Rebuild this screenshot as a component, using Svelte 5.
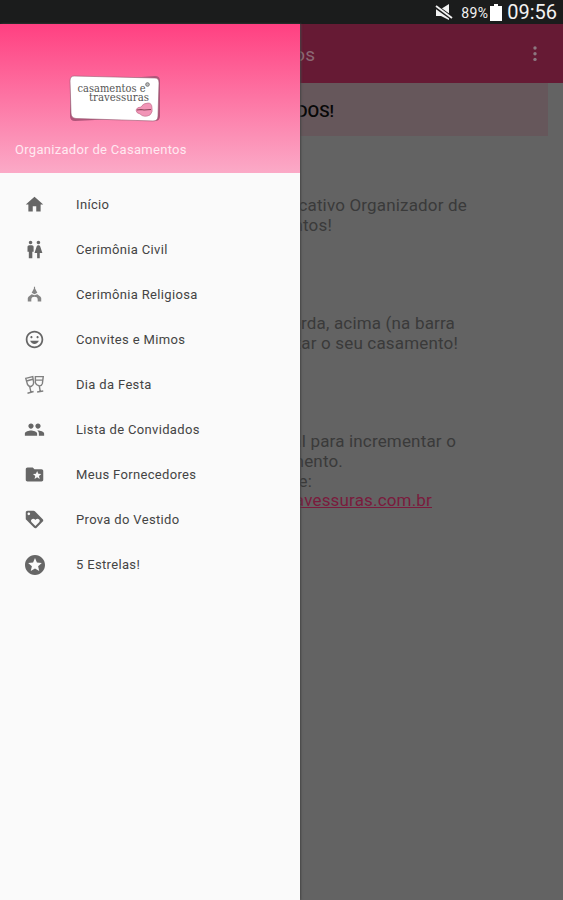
<script>
	const star =
		'M11.99 2C6.47 2 2 6.48 2 12s4.47 10 9.99 10C17.52 22 22 17.52 22 12S17.52 2 11.99 2zm4.24 16L12 15.45 7.77 18l1.12-4.81-3.73-3.23 4.92-.42L12 5l1.92 4.53 4.92.42-3.73 3.23L16.23 18z';

	const items = [
		{ label: 'Início', icon: 'M10 20v-6h4v6h5v-8h3L12 3 2 12h3v8z' },
		{
			label: 'Cerimônia Civil',
			icon: 'M5.5 22v-7.5H4V9c0-1.1.9-2 2-2h3c1.1 0 2 .9 2 2v5.5H9.5V22h-4zM18 22v-6h3l-2.54-7.63C18.18 7.55 17.42 7 16.56 7h-.12c-.86 0-1.63.55-1.9 1.37L12 16h3v6h3zM7.5 6c1.11 0 2-.89 2-2s-.89-2-2-2-2 .89-2 2 .89 2 2 2zm9 0c1.11 0 2-.89 2-2s-.89-2-2-2-2 .89-2 2 .89 2 2 2z'
		},
		{
			label: 'Cerimônia Religiosa',
			light: true,
			icon: 'M11.2 1h1.6v2.500l3.200 6-4 2-4-2 3.200-6zM8 11.500l4 1.500 4-1.500 4.500 3.500 1 2v5h-5v-3c0-3-2-4-4.500-4s-4.500 1-4.500 4v3h-5v-5l1-2z'
		},
		{
			label: 'Convites e Mimos',
			icon: 'M11.99 2C6.47 2 2 6.48 2 12s4.47 10 9.99 10C17.52 22 22 17.52 22 12S17.52 2 11.99 2zM12 20c-4.42 0-8-3.58-8-8s3.58-8 8-8 8 3.58 8 8-3.58 8-8 8zm3.5-9.500c.6 0 1.200-.5 1.200-1.200S16.100 8 15.500 8s-1.200.6-1.200 1.300.6 1.200 1.200 1.200zm-7 0c.6 0 1.200-.5 1.200-1.200S9.100 8 8.500 8s-1.200.6-1.200 1.300.6 1.200 1.200 1.200zM7 13.500c.8 2.400 2.800 3.500 5 3.500s4.200-1.100 5-3.500z'
		},
		{ label: 'Dia da Festa', glasses: true },
		{
			label: 'Lista de Convidados',
			icon: 'M16 11c1.66 0 2.99-1.34 2.99-3S17.66 5 16 5c-1.66 0-3 1.34-3 3s1.34 3 3 3zm-8 0c1.66 0 2.99-1.34 2.99-3S9.66 5 8 5C6.34 5 5 6.34 5 8s1.34 3 3 3zm0 2c-2.33 0-7 1.17-7 3.5V19h14v-2.5c0-2.33-4.67-3.5-7-3.5zm8 0c-.29 0-.62.02-.97.05 1.16.84 1.97 1.97 1.97 3.45V19h6v-2.5c0-2.33-4.67-3.5-7-3.5z'
		},
		{
			label: 'Meus Fornecedores',
			icon: 'M20 6h-8l-2-2H4c-1.1 0-1.99.9-1.99 2L2 18c0 1.1.9 2 2 2h16c1.1 0 2-.9 2-2V8c0-1.1-.9-2-2-2zm-2.06 11L15 15.28 12.06 17l.78-3.33-2.59-2.24 3.41-.29L15 8l1.34 3.14 3.41.29-2.59 2.24.78 3.33z'
		},
		{
			label: 'Prova do Vestido',
			icon: 'M21.41 11.58l-9-9C12.05 2.22 11.55 2 11 2H4c-1.1 0-2 .9-2 2v7c0 .55.22 1.05.59 1.42l9 9c.36.36.86.58 1.41.58.55 0 1.05-.22 1.41-.59l7-7c.37-.36.59-.86.59-1.41 0-.55-.23-1.06-.59-1.42zM5.5 7C4.67 7 4 6.33 4 5.5S4.67 4 5.5 4 7 4.67 7 5.5 6.33 7 5.5 7zm11.77 8.27L13 19.54l-4.27-4.27C8.28 14.81 8 14.19 8 13.5c0-1.38 1.12-2.5 2.5-2.5.69 0 1.32.28 1.77.74l.73.72.73-.73c.45-.45 1.08-.73 1.77-.73 1.38 0 2.5 1.12 2.5 2.5 0 .69-.28 1.32-.73 1.77z'
		},
		{ label: '5 Estrelas!', icon: star, large: true }
	];

	// right: where each line ends, counted from the drawer's edge
	const paragraphs = [
		[
			{ text: 'cativo Organizador de', right: 167 },
			{ text: 'ntos!', right: 32 }
		],
		[
			{ text: 'erda, acima (na barra', right: 155 },
			{ text: 'tar o seu casamento!', right: 158 }
		],
		[
			{ text: 'al para incrementar o', right: 156 },
			{ text: 'mento.', right: 43 },
			{ text: 'te:', right: 12 },
			{ text: 'avessuras.com.br', right: 132, link: true }
		]
	];
</script>

<div class="screen">
	<header class="status">
		<svg class="mute" viewBox="0 0 18 16">
			<path d="M1 5h5l8-5v16l-8-4H1z" fill="#f2f2f2" />
			<path d="M0 2l17 12" stroke="#1b1b1b" stroke-width="4" />
			<path d="M1 2l16 12" stroke="#f2f2f2" stroke-width="1.8" />
		</svg>
		<span class="percent">89%</span>
		<svg class="battery" viewBox="0 0 12 17"><path d="M4 0h4v2h4v15H0V2h4z" fill="#fff" /></svg>
		<span class="clock">09:56</span>
	</header>

	<div class="content">
		<nav class="drawer">
			<div class="banner">
				<svg class="logo" viewBox="0 0 92 48">
					<path d="M5 1Q46 5 86 1Q91 1 91 6V41Q91 46 86 46Q46 43 6 46Q1 46 1 41V6Q1 1 5 1z" fill="#b0557a" />
					<path d="M5 1L86 3Q90 3 90 8L89 41Q89 46 84 46L7 43.500Q2 43 2 38L1 6Q1 1 5 1z" fill="#fff" stroke="#9b5b72" stroke-width=".6" />
					<text x="8.5" y="17.3" textLength="68" lengthAdjust="spacingAndGlyphs">casamentos e</text>
					<text x="20" y="26" textLength="60" lengthAdjust="spacingAndGlyphs">travessuras</text>
					<circle cx="78.5" cy="9.5" r="1.8" fill="#bbb" stroke="#777" />
					<path d="M67 35q1-3 5-3q2-4 7-4q4 0 4 5q1 4-2 7q-6 3-10-1q-4-1-4-4z" fill="#f295b7" stroke="#bb6685" stroke-width=".6" />
					<path d="M68 35l4-.5 3 .5 7-.5" fill="none" stroke="#874157" stroke-width="1.2" />
				</svg>
				<p class="app-name">Organizador de Casamentos</p>
			</div>
			<ul>
				{#each items as item}
					<li>
						<span class="icon">
							{#if item.glasses}
								<svg class="glasses" viewBox="0 0 24 24">
									<path d="M2 5l8-2 1 7q0 3-2.500 4T4 12zM6.500 14.500L8 21M4 22l7-2M3 8l7-2" />
									<path d="M13 3l9 0-1 8q-1 3-4 2.500T13 10zM17.500 13.500l1 6M15 20.500l7-1M13 7h8" />
								</svg>
							{:else}
								<svg viewBox="0 0 24 24" class:large={item.large} class:light={item.light}>
									<path d={item.icon} />
								</svg>
							{/if}
						</span>
						<span class="label">{item.label}</span>
					</li>
				{/each}
			</ul>
		</nav>

		<main>
			<div class="toolbar">
				<span class="title">tos</span>
				<svg class="more" viewBox="0 0 4 16">
					<circle cx="2" cy="2" r="1.7" />
					<circle cx="2" cy="7.7" r="1.7" />
					<circle cx="2" cy="13.4" r="1.7" />
				</svg>
			</div>
			<div class="notice"><strong>DOS!</strong></div>
			<div class="texts">
				{#each paragraphs as lines}
					<div class="paragraph">
						{#each lines as line}
							<p class:link={line.link} style:width="{line.right}px"><span>{line.text}</span></p>
						{/each}
					</div>
				{/each}
			</div>
		</main>
	</div>
</div>

<style>
	:global(body) {
		background: #636363;
	}

	.screen {
		width: 563px;
		height: 900px;
		display: flex;
		flex-direction: column;
		overflow: hidden;
		font-family: Roboto, sans-serif;
	}

	p,
	ul {
		margin: 0;
		padding: 0;
	}

	.status {
		height: 24px;
		flex: none;
		box-sizing: border-box;
		background: #1b1c1c;
		color: #f2f2f2;
		display: flex;
		align-items: center;
		justify-content: flex-end;
		padding-right: 6px;
	}

	.mute {
		width: 18px;
		height: 16px;
		margin-right: 8px;
	}

	.percent {
		font-size: 14px;
		letter-spacing: 0.3px;
		padding-top: 2px;
	}

	.battery {
		width: 12px;
		height: 17px;
		margin: 0 5px 0 2px;
	}

	.clock {
		font-size: 20px;
		letter-spacing: 0;
	}

	.content {
		flex: 1;
		display: flex;
		min-height: 0;
	}

	.drawer {
		width: 300px;
		flex: none;
		background: #fafafa;
		box-shadow: 1px 0 2px #444;
		z-index: 1;
	}

	.banner {
		height: 149px;
		box-sizing: border-box;
		background: linear-gradient(#ff4081, #fbaac7);
		display: flex;
		flex-direction: column;
		padding: 51px 15px 0 69px;
	}

	.logo {
		width: 92px;
		height: 48px;
	}

	.logo text {
		font: 10.5px 'DejaVu Serif', serif;
		fill: #555;
	}

	.app-name {
		margin: 18px 0 0 -54px;
		font-size: 13px;
		line-height: 18px;
		letter-spacing: 0.3px;
		color: #ffe9f1;
	}

	ul {
		list-style: none;
		padding-top: 9px;
	}

	li {
		height: 45px;
		display: flex;
		align-items: center;
	}

	.icon {
		width: 69px;
		margin-right: 7px;
		display: flex;
		justify-content: center;
	}

	.icon svg {
		width: 21px;
		height: 21px;
		fill: #666;
	}

	.icon svg.glasses {
		fill: none;
		stroke: #808080;
		stroke-width: 1.6;
	}

	.icon svg.light {
		width: 17px;
		height: 17px;
		fill: #858585;
	}

	.icon svg.large {
		width: 24px;
		height: 24px;
	}

	.label {
		font-size: 13px;
		letter-spacing: 0.34px;
		color: #444;
	}

	main {
		flex: 1;
		min-width: 0;
		overflow: hidden;
		background: #636363;
	}

	.toolbar {
		height: 59px;
		background: #661a34;
		display: flex;
		align-items: center;
		justify-content: space-between;
		padding-right: 26px;
	}

	.title {
		width: 15px;
		padding-top: 2px;
		display: flex;
		justify-content: flex-end;
		font-size: 19px;
		color: #8c6874;
	}

	.more {
		width: 4px;
		height: 16px;
		fill: #8c7880;
	}

	.notice {
		height: 53px;
		margin-right: 15px;
		background: #66575b;
		display: flex;
		align-items: center;
	}

	.notice strong {
		width: 34px;
		padding-top: 2px;
		display: flex;
		justify-content: flex-end;
		font-size: 17px;
		font-weight: 500;
		color: #080808;
	}

	.texts {
		padding-top: 60px;
		display: flex;
		flex-direction: column;
		gap: 79px;
	}

	.paragraph p {
		display: flex;
		justify-content: flex-end;
		font-size: 17px;
		line-height: 19.6px;
		letter-spacing: 0.17px;
		white-space: nowrap;
		color: #3a3a3a;
	}

	.paragraph .link {
		color: #7a1b3d;
		text-decoration: underline;
	}
</style>
